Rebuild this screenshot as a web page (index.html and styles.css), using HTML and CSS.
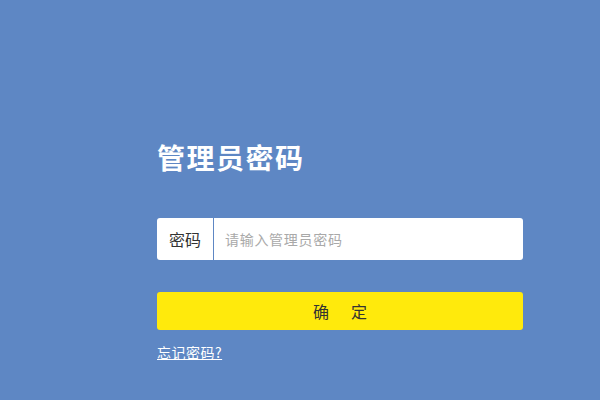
FILE: index.html
```html
<!DOCTYPE html>
<html lang="zh-CN">
<head>
<meta charset="utf-8">
<link rel="stylesheet" href="styles.css">
</head>
<body>
<div class="page">
  <div class="login">
    <h1 class="title">管理员密码</h1>
    <div class="field">
      <span class="label">密码</span>
      <input class="input" type="password" placeholder="请输入管理员密码">
    </div>
    <button class="submit"><span>确</span><span>定</span></button>
    <a class="forgot" href="#">忘记密码?</a>
  </div>
</div>
</body>
</html>
```
FILE: styles.css
```css
html, body {
  margin: 0;
  padding: 0;
  width: 600px;
  height: 400px;
  overflow: hidden;
  background: #5e87c4;
  font-family: "Noto Sans CJK SC", "Noto Sans", sans-serif;
}
.page {
  padding: 137px 0 0 157px;
}
.login {
  width: 366px;
  display: flex;
  flex-direction: column;
}
.title {
  margin: 0;
  color: #fff;
  font-size: 28px;
  font-weight: 700;
  line-height: 40px;
  letter-spacing: 1.5px;
}
.field {
  margin-top: 41px;
  height: 42px;
  display: flex;
  background: #fff;
  border-radius: 3px;
  overflow: hidden;
}
.label {
  width: 56px;
  border-right: 1px solid #5e87c4;
  display: flex;
  align-items: center;
  justify-content: center;
  font-size: 16px;
  color: #333;
}
.input {
  flex: 1;
  border: 0;
  outline: 0;
  padding: 0 0 0 11px;
  font-family: inherit;
  font-size: 14px;
  letter-spacing: 0.7px;
  color: #333;
  background: transparent;
}
.input::placeholder {
  color: #a9a9a9;
}
.submit {
  margin-top: 32px;
  height: 38px;
  border: 0;
  border-radius: 3px;
  background: #ffea0c;
  font-family: inherit;
  font-size: 16px;
  color: #333;
  padding: 0;
  display: flex;
  align-items: center;
  justify-content: center;
  gap: 22px;
}
.forgot {
  margin-top: 12px;
  align-self: flex-start;
  color: #fff;
  font-size: 14px;
  line-height: 20px;
  letter-spacing: 0.5px;
  text-decoration: underline;
}
```
